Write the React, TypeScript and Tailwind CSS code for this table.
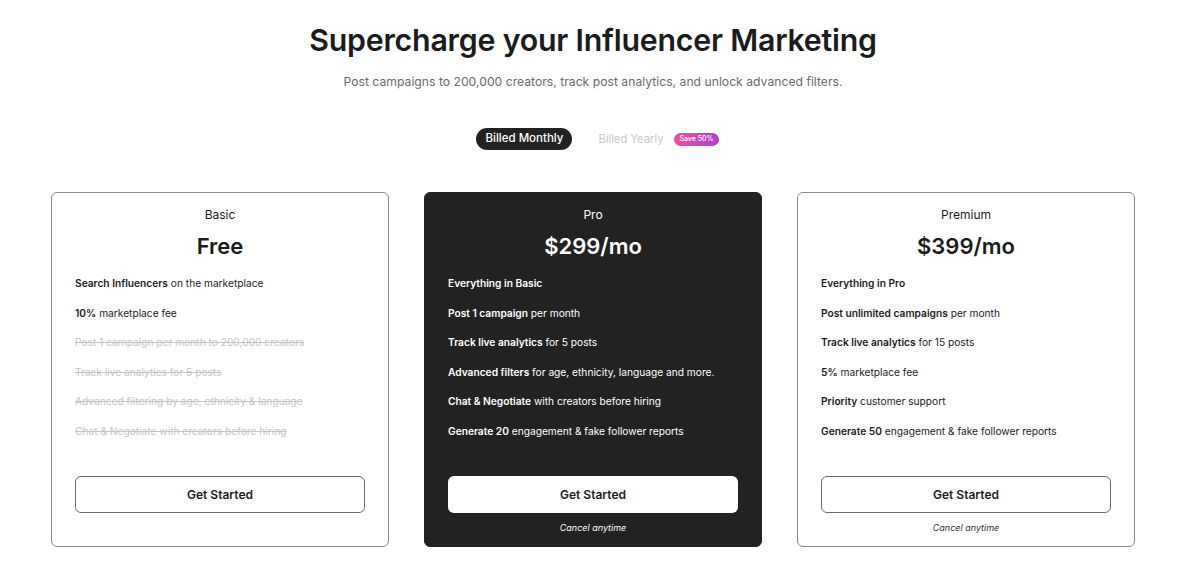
import { type ReactNode } from 'react';

interface Feature {
  bold?: string;
  rest?: string;
  off?: boolean;
}

interface Plan {
  name: string;
  price: string;
  dark?: boolean;
  cancel?: boolean;
  features: Feature[];
}

const plans: Plan[] = [
  {
    name: 'Basic',
    price: 'Free',
    features: [
      { bold: 'Search Influencers', rest: ' on the marketplace' },
      { bold: '10%', rest: ' marketplace fee' },
      { rest: 'Post 1 campaign per month to 200,000 creators', off: true },
      { rest: 'Track live analytics for 5 posts', off: true },
      { rest: 'Advanced filtering by age, ethnicity & language', off: true },
      { rest: 'Chat & Negotiate with creators before hiring', off: true },
    ],
  },
  {
    name: 'Pro',
    price: '$299/mo',
    dark: true,
    cancel: true,
    features: [
      { bold: 'Everything in Basic' },
      { bold: 'Post 1 campaign', rest: ' per month' },
      { bold: 'Track live analytics', rest: ' for 5 posts' },
      { bold: 'Advanced filters', rest: ' for age, ethnicity, language and more.' },
      { bold: 'Chat & Negotiate', rest: ' with creators before hiring' },
      { bold: 'Generate 20', rest: ' engagement & fake follower reports' },
    ],
  },
  {
    name: 'Premium',
    price: '$399/mo',
    cancel: true,
    features: [
      { bold: 'Everything in Pro' },
      { bold: 'Post unlimited campaigns', rest: ' per month' },
      { bold: 'Track live analytics', rest: ' for 15 posts' },
      { bold: '5%', rest: ' marketplace fee' },
      { bold: 'Priority', rest: ' customer support' },
      { bold: 'Generate 50', rest: ' engagement & fake follower reports' },
    ],
  },
];

function FeatureLine({ f, dark }: { f: Feature; dark?: boolean }): ReactNode {
  if (f.off) {
    return <p className="h-4 leading-4 text-[10.2px] text-[#c4c4c4] line-through">{f.rest}</p>;
  }
  return (
    <p className={`h-4 leading-4 text-[10.2px] ${dark ? 'text-white' : 'text-[#1c1c1c]'}`}>
      {f.bold && <span className="font-semibold">{f.bold}</span>}
      {f.rest}
    </p>
  );
}

function PlanCard({ plan }: { plan: Plan }) {
  const { dark } = plan;
  return (
    <div
      className={`flex h-[355px] w-[338px] flex-col rounded-[6px] px-[23px] pt-[14px] ${
        dark ? 'border border-[#222222] bg-[#222222] text-white' : 'border border-[#8a8a8a] bg-white text-[#1c1c1c]'
      }`}
    >
      <p className="h-4 text-center text-[12px] leading-4">{plan.name}</p>
      <p className="mt-[9px] h-7 text-center text-[22px] font-semibold leading-7">{plan.price}</p>
      <div className="mt-[15px] flex flex-col gap-[13.6px]">
        {plan.features.map((f, i) => (
          <FeatureLine key={i} f={f} dark={dark} />
        ))}
      </div>
      <div className="mt-auto pb-[11px]">
        <button
          className={`flex h-[37px] w-full items-center justify-center rounded-[6px] text-[12px] font-semibold ${
            dark ? 'bg-white text-[#1c1c1c]' : 'border border-[#6b6b6b] bg-white text-[#1c1c1c]'
          }`}
        >
          Get Started
        </button>
        <p
          className={`mt-[8px] h-[14px] text-center text-[9px] italic leading-[14px] ${
            plan.cancel ? '' : 'invisible'
          } ${dark ? 'text-white' : 'text-[#333333]'}`}
        >
          Cancel anytime
        </p>
      </div>
    </div>
  );
}

export default function App() {
  return (
    <div className="min-h-[564px] bg-white pt-[21px] font-['Inter',sans-serif] text-[#1c1c1c]">
      <div className="ml-[51px] flex w-[1084px] flex-col items-center">
        <h1 className="text-[30.3px] font-semibold leading-[38px] tracking-[-0.2px] text-[#1c1c1c]">
          Supercharge your Influencer Marketing
        </h1>
        <p className="mt-[14px] text-[12.2px] leading-[18px] text-[#6b6b6b]">
          Post campaigns to 200,000 creators, track post analytics, and unlock advanced filters.
        </p>
        <div className="ml-[9px] mt-[37px] flex items-center">
          <span className="flex h-[22px] items-center rounded-full bg-[#222222] px-[9px] text-[11.5px] font-medium text-white">
            Billed Monthly
          </span>
          <span className="ml-[26px] text-[11.2px] text-[#c8c8c8]">Billed Yearly</span>
          <span className="ml-[11px] flex h-[13px] items-center rounded-full bg-gradient-to-r from-[#ec4f9a] to-[#b23ad6] px-[5px] text-[7px] font-medium text-white">
            Save 50%
          </span>
        </div>
        <div className="mt-[42px] flex w-full justify-between">
          {plans.map((p) => (
            <PlanCard key={p.name} plan={p} />
          ))}
        </div>
      </div>
    </div>
  );
}
